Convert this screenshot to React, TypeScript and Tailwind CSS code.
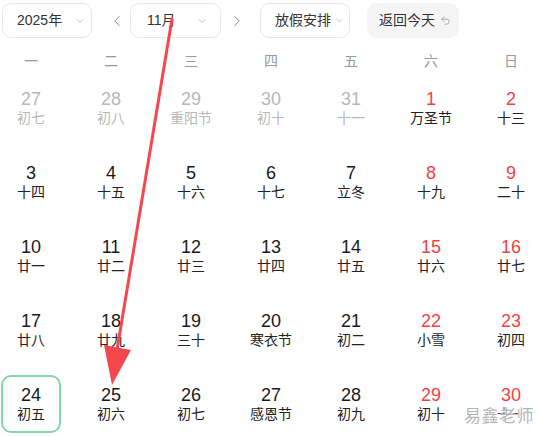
import { ChevronDown, ChevronLeft, ChevronRight, Undo2 } from "lucide-react";

type Day = { n: number; sub: string; muted?: boolean; red?: boolean; today?: boolean };

const weekdays = ["一", "二", "三", "四", "五", "六", "日"];

const rows: Day[][] = [
  [
    { n: 27, sub: "初七", muted: true },
    { n: 28, sub: "初八", muted: true },
    { n: 29, sub: "重阳节", muted: true },
    { n: 30, sub: "初十", muted: true },
    { n: 31, sub: "十一", muted: true },
    { n: 1, sub: "万圣节", red: true },
    { n: 2, sub: "十三", red: true },
  ],
  [
    { n: 3, sub: "十四" },
    { n: 4, sub: "十五" },
    { n: 5, sub: "十六" },
    { n: 6, sub: "十七" },
    { n: 7, sub: "立冬" },
    { n: 8, sub: "十九", red: true },
    { n: 9, sub: "二十", red: true },
  ],
  [
    { n: 10, sub: "廿一" },
    { n: 11, sub: "廿二" },
    { n: 12, sub: "廿三" },
    { n: 13, sub: "廿四" },
    { n: 14, sub: "廿五" },
    { n: 15, sub: "廿六", red: true },
    { n: 16, sub: "廿七", red: true },
  ],
  [
    { n: 17, sub: "廿八" },
    { n: 18, sub: "廿九" },
    { n: 19, sub: "三十" },
    { n: 20, sub: "寒衣节" },
    { n: 21, sub: "初二" },
    { n: 22, sub: "小雪", red: true },
    { n: 23, sub: "初四", red: true },
  ],
  [
    { n: 24, sub: "初五", today: true },
    { n: 25, sub: "初六" },
    { n: 26, sub: "初七" },
    { n: 27, sub: "感恩节" },
    { n: 28, sub: "初九" },
    { n: 29, sub: "初十", red: true },
    { n: 30, sub: "十一", red: true },
  ],
];

function DayCell({ d }: { d: Day }) {
  const numColor = d.muted ? "text-[#b8b8b8]" : d.red ? "text-[#f43f45]" : "text-[#1a1a1a]";
  const subColor = d.muted ? "text-[#b8b8b8]" : "text-[#222]";
  return (
    <div className="h-[74px] pt-[7px]">
      <div
        className={
          "mx-auto w-[60px] h-[58px] rounded-[10px] border-2 flex flex-col items-center justify-center " +
          (d.today ? "border-[#86d6ad]" : "border-transparent")
        }
      >
        <span className={"text-[18px] leading-[20px] " + numColor}>{d.n}</span>
        <span className={"text-[14px] leading-[19px] whitespace-nowrap " + subColor}>{d.sub}</span>
      </div>
    </div>
  );
}

export default function App() {
  return (
    <div className="relative w-[539px] h-[437px] overflow-hidden bg-white font-['Liberation_Sans','Noto_Sans_CJK_SC',sans-serif]">
      {/* toolbar */}
      <div className="flex items-center pt-[3px] pl-[2px] text-[#333] whitespace-nowrap">
        <div className="w-[90px] h-[35px] shrink-0 flex items-center pl-[14px] border border-[#e8e8e8] rounded-[9px] text-[14px]">
          <span className="shrink-0">2025年</span>
          <ChevronDown size={12} strokeWidth={1.3} className="ml-[12px] shrink-0 text-[#a0a0a0]" />
        </div>
        <button className="ml-[13px] w-[24px] shrink-0 flex justify-center text-[#888]">
          <ChevronLeft size={18} strokeWidth={1.3} />
        </button>
        <div className="ml-[1px] w-[91px] h-[35px] shrink-0 flex items-center justify-between pl-[16px] pr-[12px] border border-[#e8e8e8] rounded-[9px] text-[14px]">
          <span className="shrink-0">11月</span>
          <ChevronDown size={12} strokeWidth={1.3} className="shrink-0 text-[#a0a0a0]" />
        </div>
        <button className="ml-[4px] w-[24px] shrink-0 flex justify-center text-[#888]">
          <ChevronRight size={18} strokeWidth={1.3} />
        </button>
        <div className="ml-[11px] w-[90px] h-[35px] shrink-0 flex items-center pl-[14px] gap-[3px] border border-[#e8e8e8] rounded-[9px] text-[14px]">
          <span className="shrink-0">放假安排</span>
          <ChevronDown size={11} strokeWidth={1.3} className="shrink-0 text-[#a0a0a0]" />
        </div>
        <button className="ml-[17px] w-[92px] h-[35px] shrink-0 flex items-center gap-[5px] pl-[12px] bg-[#f5f5f5] rounded-[10px] text-[14px] text-[#333]">
          <span className="shrink-0">返回今天</span>
          <Undo2 size={11} strokeWidth={1.8} className="shrink-0 text-[#999]" />
        </button>
      </div>

      {/* calendar grid */}
      <div className="-ml-[9px] w-[560px]">
        <div className="grid grid-cols-7 mt-[12px] h-[22px] items-center text-[14px] text-[#999]">
          {weekdays.map((w) => (
            <div key={w} className="text-center">
              {w}
            </div>
          ))}
        </div>
        {rows.map((r, i) => (
          <div key={i} className="grid grid-cols-7">
            {r.map((d) => (
              <DayCell key={`${i}-${d.n}`} d={d} />
            ))}
          </div>
        ))}
      </div>

      {/* annotation arrow */}
      <svg className="absolute inset-0 pointer-events-none" width="539" height="437" viewBox="0 0 539 437">
        <line x1="172" y1="19" x2="117" y2="350" stroke="#f5484e" strokeWidth="3" strokeLinecap="round" />
        <polygon points="104,345 131,350 112,385" fill="#f5484e" />
      </svg>

      {/* watermark */}
      <div className="absolute right-[5px] bottom-[8px] text-[17px] text-[#b5b5b5] tracking-[0.5px] [text-shadow:0_0_1px_#fff,0_0_2px_#fff,1px_1px_0_#fff] pointer-events-none">
        易鑫老师
      </div>
    </div>
  );
}
